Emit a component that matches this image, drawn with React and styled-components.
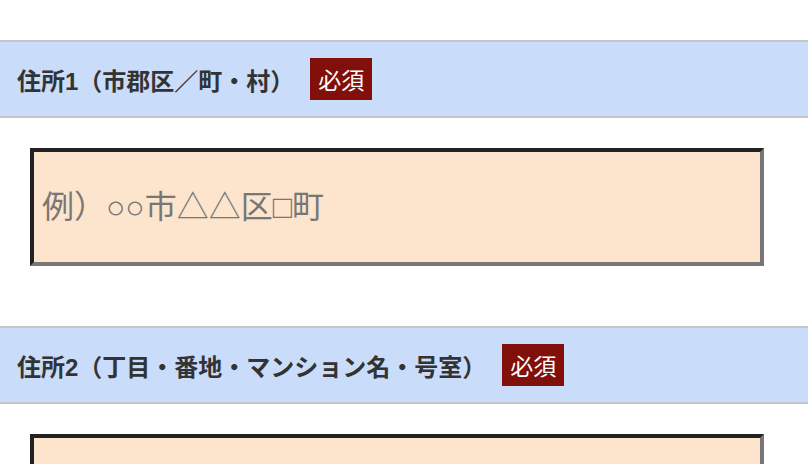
import React from "react";
import styled, { createGlobalStyle } from "styled-components";

const Global = createGlobalStyle`
  html, body { margin: 0; padding: 0; background: #fff; }
  body { font-family: "Liberation Sans", "Noto Sans CJK JP", sans-serif; }
`;

const Page = styled.div`
  padding-top: 40px;
  display: flex;
  flex-direction: column;
`;

const Field = styled.section`
  display: flex;
  flex-direction: column;
  margin-bottom: 60px;
`;

const Header = styled.div`
  display: flex;
  align-items: center;
  height: 74px;
  padding-left: 17px;
  background: #c9dcf9;
  border-top: 2px solid #c6c6c6;
  border-bottom: 2px solid #c6c6c6;
`;

const Label = styled.span`
  font-family: "Liberation Sans", "Noto Sans CJK JP", sans-serif;
  font-weight: 700;
  font-size: 24px;
  color: #333;
  margin-right: 16px;
`;

const Badge = styled.span`
  display: inline-flex;
  align-items: center;
  justify-content: center;
  height: 42px;
  padding: 0 8px;
  background: #801009;
  color: #fff;
  font-size: 23px;
  font-family: "Liberation Sans", "Noto Sans CJK JP", sans-serif;
`;

const InputWrap = styled.div`
  padding: 30px 0 0 30px;
`;

const TextInput = styled.input`
  box-sizing: border-box;
  display: block;
  width: 734px;
  height: 118px;
  margin: 0;
  padding: 0 8px;
  border: 4px solid;
  border-color: #222 #777 #777 #222;
  background: #fde5cd;
  font-family: "Liberation Sans", "Noto Sans CJK JP", sans-serif;
  font-size: 32px;
  color: #333;
  outline: none;
  &::placeholder { color: #777; opacity: 1; }
`;

const fields = [
  { label: "住所1（市郡区／町・村）", placeholder: "例）○○市△△区□町" },
  { label: "住所2（丁目・番地・マンション名・号室）", placeholder: "" },
];

export default function App() {
  return (
    <>
      <Global />
      <Page>
        {fields.map((f) => (
          <Field key={f.label}>
            <Header>
              <Label>{f.label}</Label>
              <Badge>必須</Badge>
            </Header>
            <InputWrap>
              <TextInput type="text" placeholder={f.placeholder} />
            </InputWrap>
          </Field>
        ))}
      </Page>
    </>
  );
}
